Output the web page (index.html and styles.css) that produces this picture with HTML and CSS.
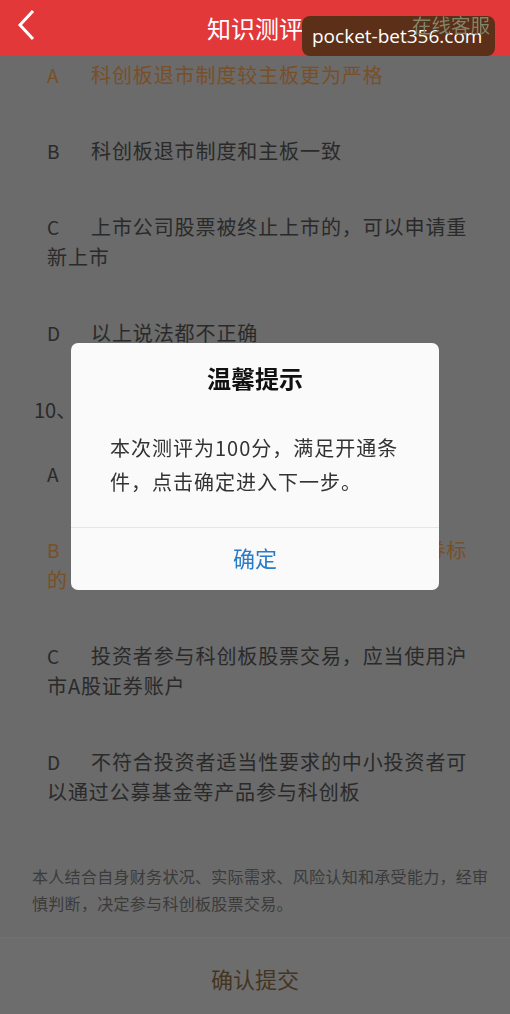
FILE: index.html
```html
<!DOCTYPE html>
<html lang="zh-CN">
<head>
	<meta charset="UTF-8">
	<title>知识测评</title>
	<link rel="stylesheet" href="styles.css">
</head>
<body>
<div class="header">
	<span class="back"><svg width="24" height="34" viewBox="0 0 24 34"><polyline points="17,3 4,17 17,31" fill="none" stroke="#fff" stroke-width="3"/></svg></span>
	<span class="title">知识测评</span>
	<span class="service">在线客服</span>
</div>

<div class="main">
	<div class="list">
		<p class="opt on"><span class="key">A</span>科创板退市制度较主板更为严格</p>
		<p class="opt"><span class="key">B</span>科创板退市制度和主板一致</p>
		<p class="opt"><span class="key">C</span>上市公司股票被终止上市的，可以申请重新上市</p>
		<p class="opt"><span class="key">D</span>以上说法都不正确</p>

		<p class="ques">10、以下关于科创板的说法正确的是</p>
		<p class="opt"><span class="key">A</span>科创板股票不可以融资融券</p>
		<p class="opt on"><span class="key">B</span>科创板股票上市首日即可作为融资融券标的</p>
		<p class="opt"><span class="key">C</span>投资者参与科创板股票交易，应当使用沪市A股证券账户</p>
		<p class="opt"><span class="key">D</span>不符合投资者适当性要求的中小投资者可以通过公募基金等产品参与科创板</p>
	</div>

	<div class="agree">本人结合自身财务状况、实际需求、风险认知和承受能力，经审慎判断，决定参与科创板股票交易。</div>
	<div class="submit">确认提交</div>
</div>

<div class="mask"></div>

<div class="dialog">
	<div class="d-title">温馨提示</div>
	<div class="d-text">本次测评为100分，满足开通条件，点击确定进入下一步。</div>
	<div class="d-btn">确定</div>
</div>

<div class="mark">pocket-bet356.com</div>
</body>
</html>
```

FILE: styles.css
```css
html,body{
	padding: 0;
	margin: 0;
	background-color: #d6d6d6;
	font-family: "Noto Sans CJK SC", "Liberation Sans", sans-serif;
	height: 100%;
	overflow: hidden;
}
.header{
	position: relative;
	height: 55px;
	display: flex;
	align-items: center;
	justify-content: center;
	background-color: #e2383a;
	color: #fff;
}
.header .back{
	position: absolute;
	left: 16px;
	top: 8px;
}
.header .title{
	font-size: 24px;
}
.header .service{
	position: absolute;
	right: 20px;
	top: 10px;
	font-size: 19.5px;
	color: #80856a;
	z-index: 6;
}
.main{
	height: calc(100% - 55px);
	overflow: hidden;
}
.list{
	margin-top: -18px;
}
.opt{
	margin: 0;
	padding: 23px 32px 23px 47px;
	font-size: 20px;
	line-height: 30px;
	letter-spacing: 0.9px;
	color: #555;
}
.opt.on{
	color: #f0a050;
}
.opt .key{
	display: inline-block;
	width: 44px;
	font-size: 19px;
	letter-spacing: 0;
}
.ques{
	margin: 0;
	padding: 24px 32px 11px 34px;
	font-size: 20px;
	line-height: 30px;
	color: #555;
	white-space: nowrap;
}
.agree{
	margin-top: 33px;
	padding: 0 18px 12px 32px;
	font-size: 16px;
	line-height: 27px;
	letter-spacing: 0.3px;
	color: #777;
}
.submit{
	margin-top: 8px;
	height: 80px;
	line-height: 80px;
	text-align: center;
	font-size: 22px;
	color: #8a6a40;
	background-color: #dadada;
	border-top: 1px solid #dedede;
}
.mask{
	position: fixed;
	top: 55px;
	left: 0;
	right: 0;
	bottom: 0;
	z-index: 2;
	background-color: rgba(0,0,0,.5);
}
.dialog{
	position: fixed;
	top: 343px;
	left: 71px;
	width: 368px;
	z-index: 4;
	background-color: #fafafa;
	border-radius: 7px;
	overflow: hidden;
}
.d-title{
	padding-top: 20px;
	text-align: center;
	font-size: 24px;
	line-height: 30px;
	font-weight: bold;
	color: #111;
}
.d-text{
	padding: 38px 36px 28px 39px;
	font-size: 20px;
	line-height: 34px;
	letter-spacing: 1px;
	color: #333;
}
.d-btn{
	height: 62px;
	line-height: 58px;
	text-align: center;
	font-size: 22px;
	color: #2a7bc8;
	border-top: 1px solid #e6e6e6;
}
.mark{
	position: fixed;
	top: 16px;
	left: 302px;
	width: 193px;
	height: 40px;
	z-index: 5;
	box-sizing: border-box;
	padding-left: 10px;
	line-height: 40px;
	font-family: "Open Sans", sans-serif;
	font-size: 19px;
	color: #fff;
	background-color: #5c3018;
	border-radius: 8px;
}
```
